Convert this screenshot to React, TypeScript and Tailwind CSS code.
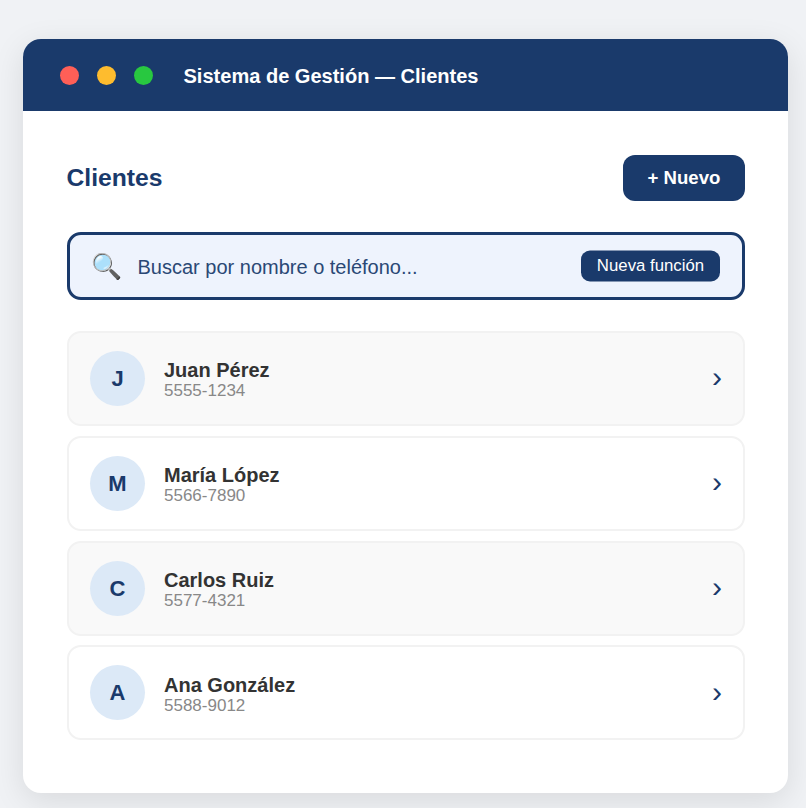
const clientes = [
    { inicial: "J", nombre: "Juan Pérez", telefono: "5555-1234", fondo: "bg-[#f9f9f9]" },
    { inicial: "M", nombre: "María López", telefono: "5566-7890", fondo: "bg-white" },
    { inicial: "C", nombre: "Carlos Ruiz", telefono: "5577-4321", fondo: "bg-[#f9f9f9]" },
    { inicial: "A", nombre: "Ana González", telefono: "5588-9012", fondo: "bg-white" },
];

function App() {
    return (
        <div className="h-[808px] overflow-hidden bg-[#f0f2f5] pt-[39px] pl-[23px] font-['Liberation_Sans',Arial,sans-serif]">
            <div className="w-[765px] h-[754px] rounded-[18px] bg-white overflow-hidden shadow-[0_8px_32px_rgba(0,0,0,0.1)]">
                <header className="flex items-center h-[72px] bg-[#1a3a6b] px-[37px]">
                    <div className="flex gap-[18px]">
                        <span className="w-[19px] h-[19px] rounded-full bg-[#ff5f57]" />
                        <span className="w-[19px] h-[19px] rounded-full bg-[#febc2e]" />
                        <span className="w-[19px] h-[19px] rounded-full bg-[#28c840]" />
                    </div>
                    <h1 className="ml-[30.5px] pt-[2px] text-[20.05px] font-bold text-white">Sistema de Gestión — Clientes</h1>
                </header>

                <main className="pl-[43.5px] pr-[43px] pt-[44px]">
                    <div className="flex items-center justify-between">
                        <h2 className="text-[24.7px] font-bold text-[#1a3a6b]">Clientes</h2>
                        <button className="w-[122px] h-[46px] rounded-[12px] bg-[#1a3a6b] text-white text-[18.6px] font-bold">+ Nuevo</button>
                    </div>

                    <div className="flex items-center h-[68px] mt-[31px] pl-[21.5px] pr-[22px] rounded-[14px] border-[3px] border-[#1a3a6b] bg-[#eef3fd]">
                        <span className="text-[25px] leading-none w-[32px] font-['Noto_Color_Emoji',sans-serif]">🔍</span>
                        <span className="ml-[14.5px] pt-[1px] text-[20px] text-[#2a4875] flex-1">Buscar por nombre o teléfono...</span>
                        <span className="flex items-center justify-center w-[139px] h-[31px] -translate-y-[0.5px] rounded-[9px] bg-[#1a3a6b] text-white text-[16.8px]">Nueva función</span>
                    </div>

                    <ul className="flex flex-col gap-[9.9px] mt-[30.8px]">
                        {clientes.map((c) => (
                            <li key={c.nombre} className={`flex items-center h-[95px] pl-[21.5px] pr-[21px] rounded-[14px] border-2 border-[#f2f2f2] ${c.fondo}`}>
                                <div className="flex items-center justify-center w-[55px] h-[55px] rounded-full bg-[#dce9f7] text-[#1a3a6b] text-[22px] font-bold">{c.inicial}</div>
                                <div className="ml-[19px] pt-[2.6px] flex-1">
                                    <div className="text-[20px] leading-[23px] font-bold text-[#333333]">{c.nombre}</div>
                                    <div className="text-[17px] leading-[18px] text-[#888888]">{c.telefono}</div>
                                </div>
                                <span className="text-[30px] leading-none text-[#1a3a6b] -translate-y-[1px]">›</span>
                            </li>
                        ))}
                    </ul>
                </main>
            </div>
        </div>
    );
}

export default App;
